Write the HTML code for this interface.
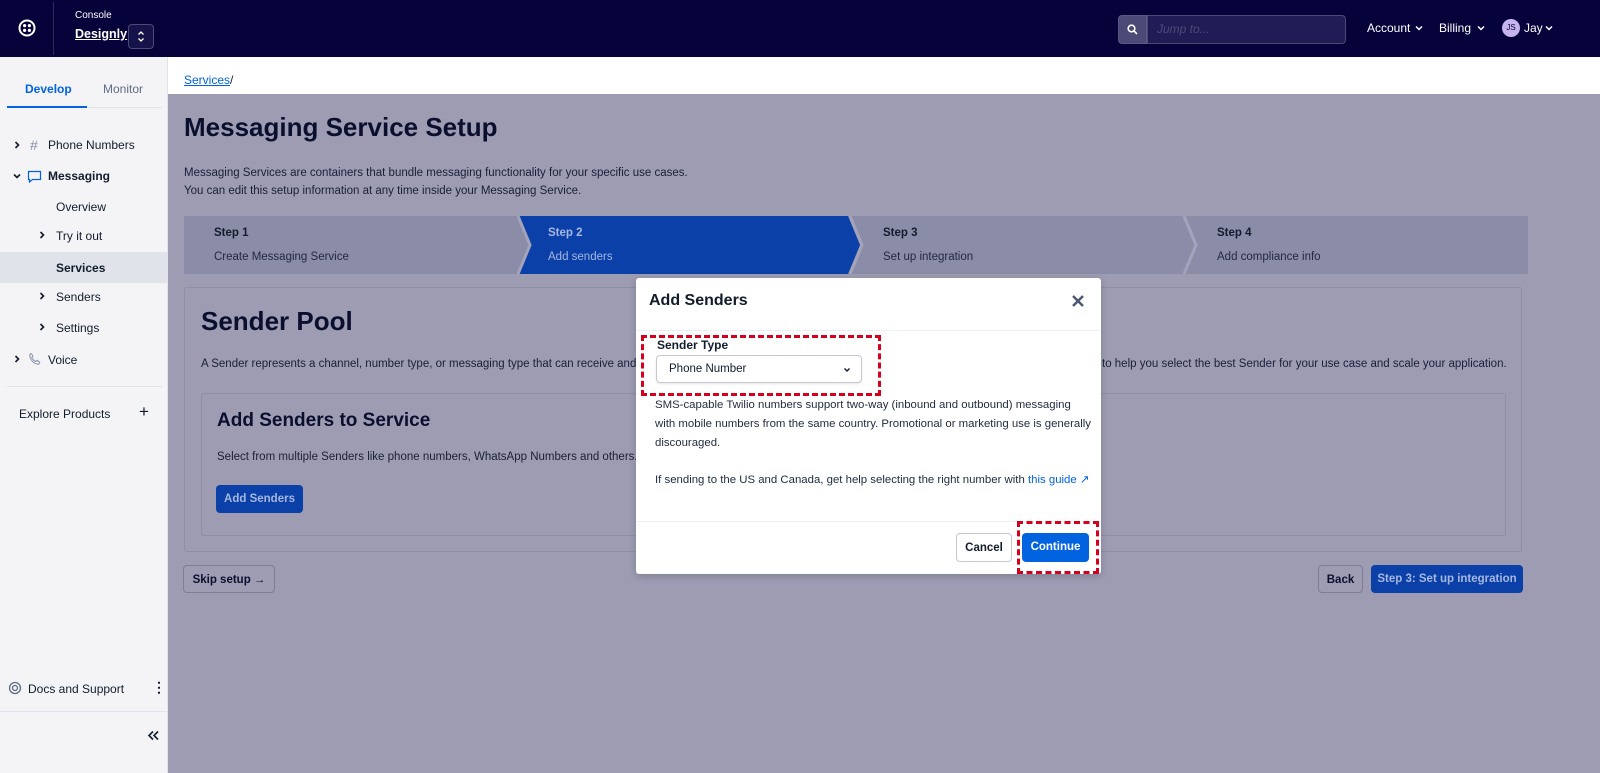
<!DOCTYPE html>
<html><head><meta charset="utf-8"><style>
*{box-sizing:border-box;margin:0;padding:0}
body{width:1600px;height:773px;overflow:hidden;font-family:"Liberation Sans",sans-serif;background:#9d9cb3;position:relative;color:#121c2d}
.abs{position:absolute}
#hdr{left:0;top:0;width:1600px;height:57px;background:#06033a}
#side{left:0;top:57px;width:168px;height:716px;background:#f4f4f6;border-right:1px solid #e1e3ea}
#crumb{left:168px;top:57px;width:1432px;height:37px;background:#fff}
.t{position:absolute;white-space:nowrap}
.step{position:absolute;top:216px;height:58px;background:#8b8ca7}
.mb{position:absolute;font-size:11.5px;font-weight:bold;border-radius:4px;text-align:center;line-height:28px}
</style></head><body>
<div id="hdr" class="abs">
  <svg class="abs" style="left:18px;top:19px" width="18" height="18" viewBox="0 0 18 18"><circle cx="9" cy="9" r="7.5" fill="none" stroke="#fff" stroke-width="2"/><circle cx="6.6" cy="6.6" r="1.6" fill="#fff"/><circle cx="11.4" cy="6.6" r="1.6" fill="#fff"/><circle cx="6.6" cy="11.4" r="1.6" fill="#fff"/><circle cx="11.4" cy="11.4" r="1.6" fill="#fff"/></svg>
  <div class="abs" style="left:53px;top:2px;width:1px;height:53px;background:#2e2b5c"></div>
  <div class="t" style="left:75px;top:10px;font-size:10px;color:#fff">Console</div>
  <div class="t" style="left:75px;top:27px;font-size:12.5px;font-weight:bold;color:#fff;text-decoration:underline">Designly</div>
  <div class="abs" style="left:128px;top:24px;width:26px;height:25px;border:1px solid #4b4a72;border-radius:4px;background:#16134a"></div>
  <svg class="abs" style="left:136px;top:30px" width="10" height="13" viewBox="0 0 10 13"><path d="M2.5 4.5L5 2l2.5 2.5M2.5 8.5L5 11l2.5-2.5" fill="none" stroke="#fff" stroke-width="1.3"/></svg>
  <div class="abs" style="left:1118px;top:15px;width:29px;height:29px;background:#4b4975;border:1px solid #5b5a85;border-radius:4px 0 0 4px"></div>
  <svg class="abs" style="left:1127px;top:24px" width="11" height="11" viewBox="0 0 11 11"><circle cx="4.5" cy="4.5" r="3.3" fill="none" stroke="#fff" stroke-width="1.6"/><path d="M7 7l3 3" stroke="#fff" stroke-width="1.6"/></svg>
  <div class="abs" style="left:1147px;top:15px;width:199px;height:29px;background:#201c55;border:1px solid #4b4a72;border-radius:0 4px 4px 0"></div>
  <div class="t" style="left:1157px;top:22px;font-size:12px;font-style:italic;color:#4d4b7a">Jump to...</div>
  <div class="t" style="left:1367px;top:21px;font-size:12px;color:#fff">Account</div>
  <svg class="abs" style="left:1415px;top:25px" width="8" height="6" viewBox="0 0 8 6"><path d="M1 1.5l3 3 3-3" fill="none" stroke="#fff" stroke-width="1.5"/></svg>
  <div class="t" style="left:1439px;top:21px;font-size:12px;color:#fff">Billing</div>
  <svg class="abs" style="left:1477px;top:25px" width="8" height="6" viewBox="0 0 8 6"><path d="M1 1.5l3 3 3-3" fill="none" stroke="#fff" stroke-width="1.5"/></svg>
  <div class="abs" style="left:1502px;top:19px;width:18px;height:18px;border-radius:50%;background:#c6b4ef;font-size:8px;text-align:center;line-height:18px;color:#06033a">JS</div>
  <div class="t" style="left:1524px;top:21px;font-size:12px;color:#fff">Jay</div>
  <svg class="abs" style="left:1545px;top:25px" width="8" height="6" viewBox="0 0 8 6"><path d="M1 1.5l3 3 3-3" fill="none" stroke="#fff" stroke-width="1.5"/></svg>
</div>
<div id="side" class="abs">
  <div class="t" style="left:25px;top:25px;font-size:12px;font-weight:bold;color:#0263e0">Develop</div>
  <div class="t" style="left:103px;top:25px;font-size:12px;color:#606b85">Monitor</div>
  <div class="abs" style="left:7px;top:50px;width:155px;height:1px;background:#e1e3ea"></div>
  <div class="abs" style="left:7px;top:49px;width:80px;height:2px;background:#0263e0"></div>
  <svg class="abs" style="left:14px;top:84px" width="6" height="8" viewBox="0 0 6 8"><path d="M1.5 1l3 3-3 3" fill="none" stroke="#121c2d" stroke-width="1.6"/></svg>
  <div class="t" style="left:30px;top:80px;font-size:14px;color:#8891aa">#</div>
  <div class="t" style="left:48px;top:81px;font-size:12px">Phone Numbers</div>
  <svg class="abs" style="left:13px;top:116px" width="8" height="6" viewBox="0 0 8 6"><path d="M1 1.5l3 3 3-3" fill="none" stroke="#121c2d" stroke-width="1.6"/></svg>
  <svg class="abs" style="left:27px;top:113px" width="15" height="13" viewBox="0 0 15 13"><path d="M1.5 1.5h12v8h-8l-3 2.5v-2.5h-1z" fill="none" stroke="#0263e0" stroke-width="1.2"/></svg>
  <div class="t" style="left:48px;top:112px;font-size:12px;font-weight:bold">Messaging</div>
  <div class="t" style="left:56px;top:143px;font-size:12px">Overview</div>
  <svg class="abs" style="left:39px;top:174px" width="6" height="8" viewBox="0 0 6 8"><path d="M1.5 1l3 3-3 3" fill="none" stroke="#121c2d" stroke-width="1.6"/></svg>
  <div class="t" style="left:56px;top:172px;font-size:12px">Try it out</div>
  <div class="abs" style="left:0;top:195px;width:168px;height:31px;background:#e1e3ea"></div>
  <div class="t" style="left:56px;top:204px;font-size:12px;font-weight:bold">Services</div>
  <svg class="abs" style="left:39px;top:235px" width="6" height="8" viewBox="0 0 6 8"><path d="M1.5 1l3 3-3 3" fill="none" stroke="#121c2d" stroke-width="1.6"/></svg>
  <div class="t" style="left:56px;top:233px;font-size:12px">Senders</div>
  <svg class="abs" style="left:39px;top:266px" width="6" height="8" viewBox="0 0 6 8"><path d="M1.5 1l3 3-3 3" fill="none" stroke="#121c2d" stroke-width="1.6"/></svg>
  <div class="t" style="left:56px;top:264px;font-size:12px">Settings</div>
  <svg class="abs" style="left:14px;top:298px" width="6" height="8" viewBox="0 0 6 8"><path d="M1.5 1l3 3-3 3" fill="none" stroke="#121c2d" stroke-width="1.6"/></svg>
  <svg class="abs" style="left:28px;top:295px" width="14" height="14" viewBox="0 0 14 14"><path d="M3 1.5l2 2.5-1.2 1.5c.8 1.8 2.2 3.2 4 4L9.3 8.3l2.5 2-1.3 2C6 12 2 8 1.7 3z" fill="none" stroke="#8891aa" stroke-width="1"/></svg>
  <div class="t" style="left:48px;top:296px;font-size:12px">Voice</div>
  <div class="abs" style="left:7px;top:329px;width:155px;height:1px;background:#e1e3ea"></div>
  <div class="t" style="left:19px;top:350px;font-size:12px">Explore Products</div>
  <div class="t" style="left:139px;top:345px;font-size:17px">+</div>
  <svg class="abs" style="left:8px;top:624px" width="14" height="14" viewBox="0 0 14 14"><circle cx="7" cy="7" r="5.5" fill="none" stroke="#606b85" stroke-width="1.3"/><circle cx="7" cy="7" r="2.5" fill="none" stroke="#606b85" stroke-width="1.3"/></svg>
  <div class="t" style="left:28px;top:625px;font-size:12px">Docs and Support</div>
  <div class="t" style="left:152px;top:622px;font-size:14px;font-weight:bold">⋮</div>
  <div class="abs" style="left:0;top:654px;width:168px;height:1px;background:#e1e3ea"></div>
  <svg class="abs" style="left:147px;top:673px" width="13" height="11" viewBox="0 0 13 11"><path d="M6 1.5L2 5.5l4 4M11 1.5L7 5.5l4 4" fill="none" stroke="#121c2d" stroke-width="1.6"/></svg>
</div>
<div id="crumb" class="abs">
  <div class="t" style="left:16px;top:16px;font-size:12px;color:#0263e0;text-decoration:underline">Services</div>
  <div class="t" style="left:62px;top:16px;font-size:12px">/</div>
</div>
<div class="t" style="left:184px;top:112px;font-size:26px;font-weight:bold;color:#0b0f2e">Messaging Service Setup</div>
<div class="t" style="left:184px;top:164px;font-size:11.5px;line-height:18px;color:#1a1f38">Messaging Services are containers that bundle messaging functionality for your specific use cases.<br>You can edit this setup information at any time inside your Messaging Service.</div>
<div class="step" style="left:184px;width:1344px"></div>
<svg class="abs" style="left:184px;top:216px" width="1344" height="58" viewBox="0 0 1344 58">
<polygon points="334,0 664,0 676,29 664,58 334,58 346,29" fill="#0b40a8"/>
<polyline points="334,0 346,29 334,58" fill="none" stroke="#a3a4bb" stroke-width="3"/>
<polyline points="666,0 678,29 666,58" fill="none" stroke="#a3a4bb" stroke-width="3"/>
<polyline points="1000,0 1012,29 1000,58" fill="none" stroke="#a3a4bb" stroke-width="3"/>
</svg>
<div class="t" style="left:214px;top:227px;font-size:11.5px;font-weight:bold">Step 1</div>
<div class="t" style="left:214px;top:251px;font-size:11.5px;color:#232843">Create Messaging Service</div>
<div class="t" style="left:548px;top:227px;font-size:11.5px;font-weight:bold;color:#a6b7e0">Step 2</div>
<div class="t" style="left:548px;top:251px;font-size:11.5px;color:#a6b7e0">Add senders</div>
<div class="t" style="left:883px;top:227px;font-size:11.5px;font-weight:bold">Step 3</div>
<div class="t" style="left:883px;top:251px;font-size:11.5px;color:#232843">Set up integration</div>
<div class="t" style="left:1217px;top:227px;font-size:11.5px;font-weight:bold">Step 4</div>
<div class="t" style="left:1217px;top:251px;font-size:11.5px;color:#232843">Add compliance info</div>
<div class="abs" style="left:184px;top:287px;width:1338px;height:265px;border:1px solid #8e8ea6;border-radius:3px"></div>
<div class="t" style="left:201px;top:306px;font-size:26px;font-weight:bold;color:#0b0f2e">Sender Pool</div>
<div class="t" style="left:201px;top:358px;font-size:11.5px;color:#1a1f38">A Sender represents a channel, number type, or messaging type that can receive and se</div>
<div class="t" style="left:1102px;top:358px;font-size:11.5px;color:#1a1f38">to help you select the best Sender for your use case and scale your application.</div>
<div class="abs" style="left:201px;top:393px;width:1305px;height:143px;border:1px solid #8e8ea6;border-radius:3px"></div>
<div class="t" style="left:217px;top:410px;font-size:19px;font-weight:bold;color:#0b0f2e">Add Senders to Service</div>
<div class="t" style="left:217px;top:451px;font-size:11.5px;color:#1a1f38">Select from multiple Senders like phone numbers, WhatsApp Numbers and others. U</div>
<div class="mb" style="left:216px;top:485px;width:87px;height:28px;background:#0b40a8;color:#a6b7e0">Add Senders</div>
<div class="mb" style="left:183px;top:565px;width:92px;height:28px;border:1px solid #7d7e98;color:#0b0f2e">Skip setup →</div>
<div class="mb" style="left:1318px;top:565px;width:45px;height:28px;border:1px solid #7d7e98;color:#0b0f2e">Back</div>
<div class="mb" style="left:1371px;top:565px;width:152px;height:28px;background:#0b40a8;color:#a6b7e0">Step 3: Set up integration</div>
<!-- modal -->
<div class="abs" style="left:636px;top:278px;width:465px;height:296px;background:#fff;border-radius:3px;box-shadow:0 2px 8px rgba(0,0,0,.2)">
  <div class="t" style="left:13px;top:14px;font-size:16px;font-weight:bold">Add Senders</div>
  <svg class="abs" style="left:435px;top:16px" width="14" height="14" viewBox="0 0 14 14"><path d="M2 2l10 10M12 2L2 12" stroke="#4b5671" stroke-width="2.4"/></svg>
  <div class="abs" style="left:0;top:52px;width:465px;height:1px;background:#eef0f4"></div>
  <div class="abs" style="left:5px;top:57px;width:240px;height:61px;border:3px dashed #d6001c"></div>
  <div class="t" style="left:21px;top:60px;font-size:12px;font-weight:bold">Sender Type</div>
  <div class="abs" style="left:20px;top:77px;width:206px;height:28px;border:1px solid #c5c8d2;border-radius:4px;box-shadow:0 1px 2px rgba(0,0,0,.1)"></div>
  <div class="t" style="left:33px;top:85px;font-size:11.5px">Phone Number</div>
  <svg class="abs" style="left:207px;top:89px" width="8" height="6" viewBox="0 0 8 6"><path d="M1.5 1.5l2.5 2.5 2.5-2.5" fill="none" stroke="#121c2d" stroke-width="1.4"/></svg>
  <div class="t" style="left:19px;top:118px;font-size:11.4px;line-height:19px;color:#1f2a40">SMS-capable Twilio numbers support two-way (inbound and outbound) messaging<br>with mobile numbers from the same country. Promotional or marketing use is generally<br>discouraged.</div>
  <div class="t" style="left:19px;top:194px;font-size:11.4px;color:#1f2a40">If sending to the US and Canada, get help selecting the right number with <span style="color:#0263e0">this guide ↗</span></div>
  <div class="abs" style="left:0;top:243px;width:465px;height:1px;background:#eef0f4"></div>
  <div class="mb" style="left:320px;top:255px;width:56px;height:29px;border:1px solid #c5c8d2;color:#121c2d">Cancel</div>
  <div class="abs" style="left:381px;top:243px;width:82px;height:53px;border:3px dashed #d6001c"></div>
  <div class="mb" style="left:386px;top:255px;width:67px;height:29px;background:#0263e0;color:#fff">Continue</div>
</div>
</body></html>
